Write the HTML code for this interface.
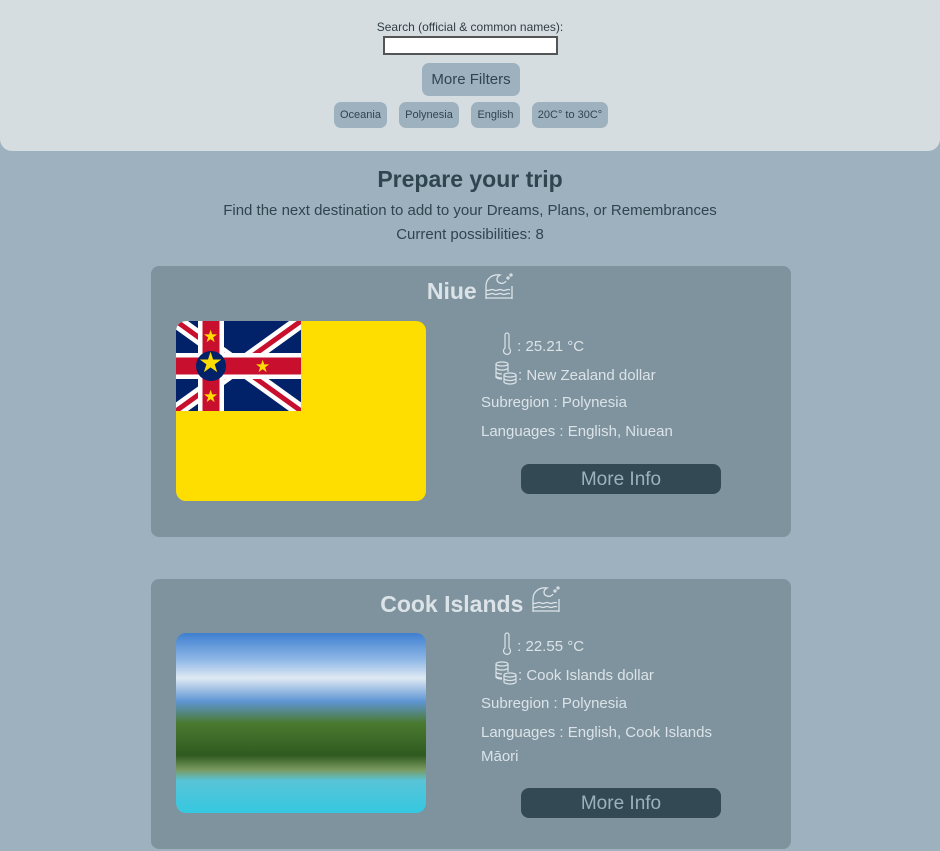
<!DOCTYPE html>
<html><head><meta charset="utf-8"><style>
body{margin:0;background:#9db1be;font-family:"Liberation Sans",sans-serif;width:940px;height:851px;overflow:hidden;position:relative}
.top{position:absolute;left:0;top:0;width:940px;height:151px;background:#d6dde1;border-radius:0 0 12px 12px;text-align:center}
.lbl{position:absolute;top:20px;width:100%;font-size:12px;color:#2f3d44}
.inp{position:absolute;left:383px;top:36px;width:171px;height:15px;background:#fff;border:2px solid #555}
.mf{position:absolute;left:422px;top:63px;width:98px;height:33px;background:#9db1be;border-radius:7px;font-size:15px;color:#2f4550;line-height:34px}
.tag{position:absolute;top:102px;height:26px;line-height:27px;background:#9db1be;border-radius:7px;font-size:11px;color:#2f4550}
h1{position:absolute;top:166px;width:100%;margin:0;text-align:center;font-size:23px;color:#2f4550}
.sub{position:absolute;width:100%;text-align:center;font-size:15px;color:#2f4550}
.card{position:absolute;left:151px;width:640px;background:#7f939e;border-radius:8px;color:#dbe3e8}
.card h2{position:absolute;top:6px;width:100%;margin:0;text-align:center;font-size:23px;color:#dbe3e8}
.img{position:absolute;left:25px;top:55px;width:250px;height:180px;border-radius:10px;overflow:hidden}
.t{position:absolute;left:330px;font-size:15px}
.btn{position:absolute;left:370px;width:200px;height:30px;background:#334a55;border-radius:8px;color:#9db1be;text-align:center;line-height:31px;font-size:19px}
.ic{vertical-align:-5px}
</style></head><body>
<div class="top">
<div class="lbl">Search (official &amp; common names):</div>
<div class="inp"></div>
<div class="mf">More Filters</div>
<div class="tag" style="left:334px;width:53px">Oceania</div>
<div class="tag" style="left:399px;width:60px">Polynesia</div>
<div class="tag" style="left:471px;width:49px">English</div>
<div class="tag" style="left:532px;width:76px">20C° to 30C°</div>
</div>
<h1>Prepare your trip</h1>
<div class="sub" style="top:202px">Find the next destination to add to your Dreams, Plans, or Remembrances</div>
<div class="sub" style="top:226px">Current possibilities: 8</div>

<div class="card" style="top:266px;height:271px">
<h2>Niue <svg width="32" height="30" viewBox="0 0 32 30" style="vertical-align:-3px" fill="none" stroke="#dbe3e8" stroke-width="1.3"><path d="M3 27V14C3 6 10 2 17 3c-4 2-4 7 0 8 2 1 5 0 6-2M3 18c3 2 5-2 8 0s5-2 8 0 5-2 8 0M3 22c3 2 5-2 8 0s5-2 8 0 5-2 8 0M3 26h26M29 27V14"/><circle cx="25" cy="6" r="1"/><circle cx="28" cy="3" r="1"/></svg></h2>
<div class="img" style="background:#fedd00">
<svg width="125" height="90" viewBox="0 0 125 90" style="position:absolute;left:0;top:0"><rect width="125" height="90" fill="#012169"/><path d="M0 0L125 90M125 0L0 90" stroke="#fff" stroke-width="14"/><path d="M0 0L125 90M125 0L0 90" stroke="#c8102e" stroke-width="5"/><path d="M35 0v90M0 45h125" stroke="#fff" stroke-width="26"/><path d="M35 0v90M0 45h125" stroke="#c8102e" stroke-width="17"/><circle cx="35" cy="45" r="15" fill="#012169"/></svg>
<div style="position:absolute;left:22px;top:28px;font-size:28px;color:#fedd00;line-height:1">★</div>
<div style="position:absolute;left:27px;top:7px;font-size:17px;color:#fedd00;line-height:1">★</div>
<div style="position:absolute;left:27px;top:67px;font-size:17px;color:#fedd00;line-height:1">★</div>
<div style="position:absolute;left:79px;top:37px;font-size:17px;color:#fedd00;line-height:1">★</div>
</div>
<div class="t" style="top:66px;left:350px"><svg class="ic" width="12" height="24" viewBox="0 0 12 24" fill="none" stroke="#dbe3e8" stroke-width="1.2"><path d="M4 3a2 2 0 014 0v13a3.5 3.5 0 11-4 0z"/></svg> : 25.21 °C</div>
<div class="t" style="top:95px;left:343px"><svg class="ic" width="24" height="24" viewBox="0 0 24 24" fill="none" stroke="#dbe3e8" stroke-width="1.2"><ellipse cx="8" cy="3" rx="6" ry="2"/><path d="M2 3v13c0 1 3 2 6 2M14 3v8M2 7c0 1 3 2 6 2s6-1 6-2M2 11c0 1 3 2 6 2M2 15c0 1 3 2 6 2"/><ellipse cx="16" cy="14" rx="6" ry="2"/><path d="M10 14v7c0 1 3 2 6 2s6-1 6-2v-7M10 17.5c0 1 3 2 6 2s6-1 6-2"/></svg>: New Zealand dollar</div>
<div class="t" style="top:128px">Subregion : Polynesia</div>
<div class="t" style="top:157px">Languages : English, Niuean</div>
<div class="btn" style="top:198px">More Info</div>
</div>

<div class="card" style="top:579px;height:270px">
<h2>Cook Islands <svg width="32" height="30" viewBox="0 0 32 30" style="vertical-align:-3px" fill="none" stroke="#dbe3e8" stroke-width="1.3"><path d="M3 27V14C3 6 10 2 17 3c-4 2-4 7 0 8 2 1 5 0 6-2M3 18c3 2 5-2 8 0s5-2 8 0 5-2 8 0M3 22c3 2 5-2 8 0s5-2 8 0 5-2 8 0M3 26h26M29 27V14"/><circle cx="25" cy="6" r="1"/><circle cx="28" cy="3" r="1"/></svg></h2>
<div class="img" style="top:54px;background:linear-gradient(#3f7fd0 0%,#8fb8e6 15%,#dfe9f3 25%,#5f95d4 38%,#4a7a30 50%,#2f5a20 68%,#7a9a60 76%,#58c4d8 82%,#35c8e0 100%)"></div>
<div class="t" style="top:53px;left:350px"><svg class="ic" width="12" height="24" viewBox="0 0 12 24" fill="none" stroke="#dbe3e8" stroke-width="1.2"><path d="M4 3a2 2 0 014 0v13a3.5 3.5 0 11-4 0z"/></svg> : 22.55 °C</div>
<div class="t" style="top:82px;left:343px"><svg class="ic" width="24" height="24" viewBox="0 0 24 24" fill="none" stroke="#dbe3e8" stroke-width="1.2"><ellipse cx="8" cy="3" rx="6" ry="2"/><path d="M2 3v13c0 1 3 2 6 2M14 3v8M2 7c0 1 3 2 6 2s6-1 6-2M2 11c0 1 3 2 6 2M2 15c0 1 3 2 6 2"/><ellipse cx="16" cy="14" rx="6" ry="2"/><path d="M10 14v7c0 1 3 2 6 2s6-1 6-2v-7M10 17.5c0 1 3 2 6 2s6-1 6-2"/></svg>: Cook Islands dollar</div>
<div class="t" style="top:116px">Subregion : Polynesia</div>
<div class="t" style="top:142px;width:250px;line-height:24px">Languages : English, Cook Islands Māori</div>
<div class="btn" style="top:209px">More Info</div>
</div>
</body></html>
